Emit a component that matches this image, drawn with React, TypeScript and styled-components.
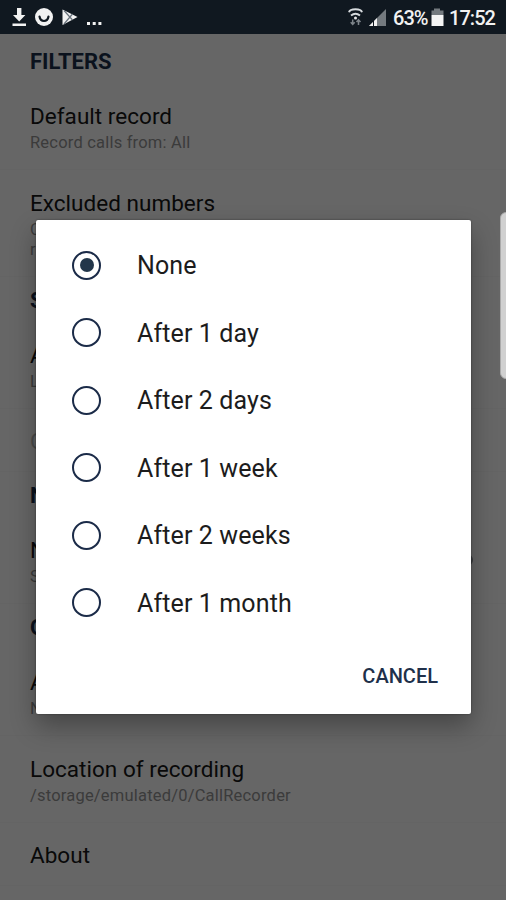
import React from 'react';
import styled, { createGlobalStyle } from 'styled-components';

const GlobalStyle = createGlobalStyle`
  * { box-sizing: border-box; }
  body { margin: 0; background: #666; font-family: Roboto, sans-serif; }
`;

const Screen = styled.div`
  position: relative;
  width: 506px;
  height: 900px;
  overflow: hidden;
  background: #666666;
`;

const StatusBar = styled.header`
  display: flex;
  justify-content: space-between;
  height: 34px;
  padding: 0 11px 0 10px;
  background: #101820;
  color: #f2f2f2;
`;

const StatusGroup = styled.div`
  display: flex;
  align-items: center;
`;

const StatusText = styled.span<{ $width: number }>`
  width: ${p => p.$width}px;
  font-size: 20px;
  font-weight: 500;
  line-height: 34px;
  letter-spacing: -0.95px;
  white-space: nowrap;
  padding-top: 1px;
`;

const Settings = styled.main`
  padding-top: 4px;
`;

const SectionTitle = styled.h2`
  height: 45px;
  margin: 0;
  padding: 1px 30px 0;
  color: #0b121d;
  font-size: 22px;
  font-weight: 700;
  line-height: 46px;
`;

const Row = styled.section<{ $single?: boolean }>`
  display: flex;
  justify-content: space-between;
  align-items: center;
  height: ${p => (p.$single ? '63px' : 'auto')};
  padding: ${p => (p.$single ? '1px 30px 0' : '17px 30px 17px')};
  border-bottom: 1px solid #646464;
`;

const RowTitle = styled.div<{ $disabled?: boolean }>`
  color: ${p => (p.$disabled ? '#4a4a4a' : '#090909')};
  font-size: 22.5px;
  line-height: 32px;
  letter-spacing: 0.03px;
`;

const Summary = styled.div`
  position: relative;
  top: 1px;
  color: #3b3b3b;
  font-size: 16.5px;
  line-height: 20px;
  letter-spacing: 0.2px;
  white-space: pre-line;
`;

const Toggle = styled.span`
  width: 36px;
  height: 12px;
  margin-right: 3px;
  border-radius: 6px;
  background: #3a3c3f;
`;

const EdgeHandle = styled.div`
  position: absolute;
  top: 212px;
  right: -6px;
  width: 12px;
  height: 167px;
  border: 1px solid #aaa;
  border-radius: 6px;
  background: #d0d0d0;
`;

const Dialog = styled.div`
  position: absolute;
  top: 220px;
  left: 36px;
  display: flex;
  flex-direction: column;
  width: 435px;
  height: 494px;
  padding: 11.5px 0 0;
  border-radius: 2px;
  background: #fff;
  box-shadow: 0 0 2px rgba(0, 0, 0, 0.45), 0 12px 26px rgba(0, 0, 0, 0.32);
`;

const Option = styled.div`
  display: flex;
  align-items: center;
  gap: 36px;
  height: 67.5px;
  padding-left: 36px;
  color: #1c1c1c;
  font-size: 25px;
  line-height: 30px;
  letter-spacing: 0.12px;
`;

const OptionLabel = styled.span`
  padding-top: 2px;
`;

const Radio = styled.span<{ $checked: boolean }>`
  display: grid;
  place-items: center;
  width: 29px;
  height: 29px;
  border: 2.5px solid #1b2b48;
  border-radius: 50%;
  &::after {
    content: '';
    width: 14px;
    height: 14px;
    border-radius: 50%;
    background: ${p => (p.$checked ? '#22364a' : 'transparent')};
  }
`;

const Actions = styled.div`
  display: flex;
  justify-content: flex-end;
  padding: 25px 33px 0;
`;

const CancelButton = styled.button`
  padding: 0;
  border: 0;
  background: none;
  color: #20304a;
  font: 500 20px/28px Roboto, sans-serif;
`;

const SignalSvg = styled.svg`
  flex: none;
  margin-right: 5px;
`;

const options = ['None', 'After 1 day', 'After 2 days', 'After 1 week', 'After 2 weeks', 'After 1 month'];

type SettingProps = { title: string; summary?: string; disabled?: boolean; toggle?: boolean };

const Setting = ({ title, summary, disabled, toggle }: SettingProps) => (
  <Row $single={!summary}>
    <div>
      <RowTitle $disabled={disabled}>{title}</RowTitle>
      {summary && <Summary>{summary}</Summary>}
    </div>
    {toggle && <Toggle />}
  </Row>
);

const NotificationIcons = () => (
  <svg width="96" height="34" viewBox="10 0 96 34" fill="#f2f2f2">
    <path d="M17 8h4.400v7h4L19.200 21.500 13 15h4zM12.500 23.500h13.500v2.500H12.500z" />
    <circle cx="44" cy="17" r="9" />
    <path d="M39.500 16.500c1 6 8 6 9 0" fill="none" stroke="#101820" strokeWidth="2.200" strokeLinecap="round" />
    <path d="M62.500 9.500 77.500 17 62.500 25z" />
    <path d="M64 10.500 72.500 20M64 24 72.500 14" fill="none" stroke="#66707a" strokeWidth="1.200" />
    <path d="M87 22h3v3h-3zM92.700 22h3v3h-3zM98.400 22h3v3h-3z" />
  </svg>
);

const SignalIcons = () => (
  <SignalSvg width="43" height="34" viewBox="345 0 43 34">
    <g fill="none" stroke="#d6dadd" strokeWidth="1.900">
      <path d="M349 12.300c1-4 12-4 13 0M351 15.500q4.500-3.500 9 0" />
    </g>
    <circle cx="355.500" cy="18" r="1.500" fill="#e8e8e8" />
    <path d="M352.700 19.500v5M350.700 22.300l2 2.200 2-2.200M358.500 25v-5M356.500 22l2-2.200 2 2.200" fill="none" stroke="#7d848a" strokeWidth="1.500" />
    <path d="M369 26 386 9v17z" fill="#747a7f" />
    <path d="M369 26 377 18v8z" fill="#f2f2f2" />
    <path d="M373.500 19v7" stroke="#101820" strokeWidth="1" />
  </SignalSvg>
);

const BatteryIcon = () => (
  <svg width="18" height="34" viewBox="431 0 18 34">
    <path d="M434 8.500h6v2h3.500V15h-12v-4.500h2.500z" fill="#747a7f" />
    <path d="M431.500 15h12v11h-12z" fill="#f5f5f5" />
  </svg>
);

export default function App() {
  return (
    <>
      <GlobalStyle />
      <Screen>
        <StatusBar>
          <NotificationIcons />
          <StatusGroup>
            <SignalIcons />
            <StatusText $width={38}>63%</StatusText>
            <BatteryIcon />
            <StatusText $width={46}>17:52</StatusText>
          </StatusGroup>
        </StatusBar>
        <Settings>
          <SectionTitle>FILTERS</SectionTitle>
          <Setting title="Default record" summary="Record calls from: All" />
          <Setting title="Excluded numbers" summary={'Calls not\nrecorded'} />
          <SectionTitle>STORAGE</SectionTitle>
          <Setting title="Auto delete" summary="Limit" />
          <Setting title="Cloud" disabled />
          <SectionTitle>NOTIFICATIONS</SectionTitle>
          <Setting title="Notification" summary="Show" toggle />
          <SectionTitle>OTHER</SectionTitle>
          <Setting title="Auto clean" summary="None" />
          <Setting title="Location of recording" summary="/storage/emulated/0/CallRecorder" />
          <Setting title="About" />
        </Settings>
        <EdgeHandle />
        <Dialog role="dialog">
          {options.map((label, index) => (
            <Option key={label}>
              <Radio $checked={index === 0} />
              <OptionLabel>{label}</OptionLabel>
            </Option>
          ))}
          <Actions>
            <CancelButton>CANCEL</CancelButton>
          </Actions>
        </Dialog>
      </Screen>
    </>
  );
}
